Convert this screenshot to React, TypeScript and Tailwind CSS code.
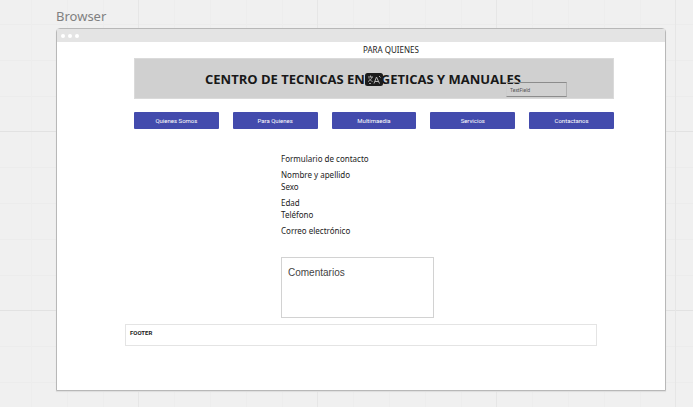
const links = ["Quienes Somos", "Para Quienes", "Multimaedia", "Servicios", "Contactanos"];

const fieldGroups = [
  ["Formulario de contacto"],
  ["Nombre y apellido", "Sexo"],
  ["Edad", "Teléfono"],
  ["Correo electrónico"],
];

function TitleBar() {
  return (
    <div className="flex h-[13px] items-center gap-[3px] bg-[#e4e4e4] pl-1">
      <span className="size-1 rounded-full bg-white" />
      <span className="size-1 rounded-full bg-white" />
      <span className="size-1 rounded-full bg-white" />
    </div>
  );
}

function TranslateBadge() {
  return (
    <svg viewBox="0 0 18 13" className="absolute inset-x-0 top-[3px] h-[13px] w-[18px]" aria-hidden="true">
      <rect width="18" height="13" rx="2.5" fill="#1c1c1c" />
      <path d="M3 4h5M5.500 2.500V4M7 4c-.5 2-2 3.500-4 4.500M4 5.500c1 1.500 2 2.300 3.500 3M4 10.500h2" stroke="#b4b4b4" strokeWidth=".9" fill="none" />
      <path d="M9 10.500l2.500-6.500 3 6.500M10 8.500h3.500M14 3l1.500 1.500" stroke="#b4b4b4" strokeWidth="1" fill="none" />
    </svg>
  );
}

function Banner() {
  return (
    <header className="relative flex h-[41px] items-center justify-center border border-[#dadada] bg-[#d0d0d0] pr-[22px]">
      <h1 className="font-['Open_Sans','Noto_Sans',sans-serif] text-[13px] leading-5 font-bold whitespace-nowrap text-[#181818]">
        CENTRO DE TECNICAS EN
        <span className="relative">
          ER
          <TranslateBadge />
        </span>
        GETICAS Y MANUALES
      </h1>
      <input
        type="text"
        aria-label="TextField"
        placeholder="TextField"
        className="absolute right-[46px] bottom-px h-[15px] w-[61px] border border-[#8c8c8c] border-r-[#b0b0b0] border-l-[#cccccc] bg-transparent px-[3px] font-['Roboto',sans-serif] text-[5px] placeholder:text-[#555555]"
      />
    </header>
  );
}

export default function App() {
  return (
    <div className="min-h-screen bg-[#f0f0f0] bg-[linear-gradient(to_right,#e6e6e6_1px,transparent_1px),linear-gradient(to_bottom,#e2e2e2_1px,transparent_1px),repeating-linear-gradient(to_right,#ededed_0_1px,transparent_1px_36px),repeating-linear-gradient(to_bottom,#ececec_0_1px,transparent_1px_36px)] bg-[size:179px_179px] bg-[position:138px_131px] pt-2 pr-[27px] pb-4 pl-14 font-['Noto_Sans',sans-serif] text-[#222222]">
      <h2 className="h-5 text-[13px] leading-4 text-[#808080]">Browser</h2>
      <main className="rounded-t-sm border border-[#b8b8b8] bg-white pb-11 shadow-[0_1px_1px_#dddddd]">
        <TitleBar />
        <p className="pl-[60px] text-center text-[8px] leading-4">PARA QUIENES</p>
        <div className="pr-[51px] pl-[77px]">
          <Banner />
          <nav className="mt-[13px] grid grid-cols-5 gap-[14px]">
            {links.map((label) => (
              <button
                key={label}
                type="button"
                className="h-[17px] rounded-[1px] bg-[#434bad] font-['Roboto',sans-serif] text-[6px] leading-4 text-white"
              >
                {label}
              </button>
            ))}
          </nav>
        </div>
        <form className="pt-6 pr-[231px] pl-[224px]">
          <div className="flex flex-col gap-1 text-[8px] leading-3">
            {fieldGroups.map((group) => (
              <div key={group[0]}>
                {group.map((name) => (
                  <p key={name}>{name}</p>
                ))}
              </div>
            ))}
          </div>
          <textarea
            aria-label="Comentarios"
            placeholder="Comentarios"
            className="mt-5 block h-[61px] w-full resize-none border border-[#d2d2d2] bg-white px-[6px] py-[9px] font-['Liberation_Sans',Arial,sans-serif] text-[10px] leading-3 placeholder:text-[#444444]"
          />
        </form>
        <footer className="mt-[6px] mr-[68px] ml-[68px] h-[22px] border border-[#e4e4e4] px-1 pt-1 font-['Roboto',sans-serif] text-[6px] leading-2 font-bold">
          FOOTER
        </footer>
      </main>
    </div>
  );
}
